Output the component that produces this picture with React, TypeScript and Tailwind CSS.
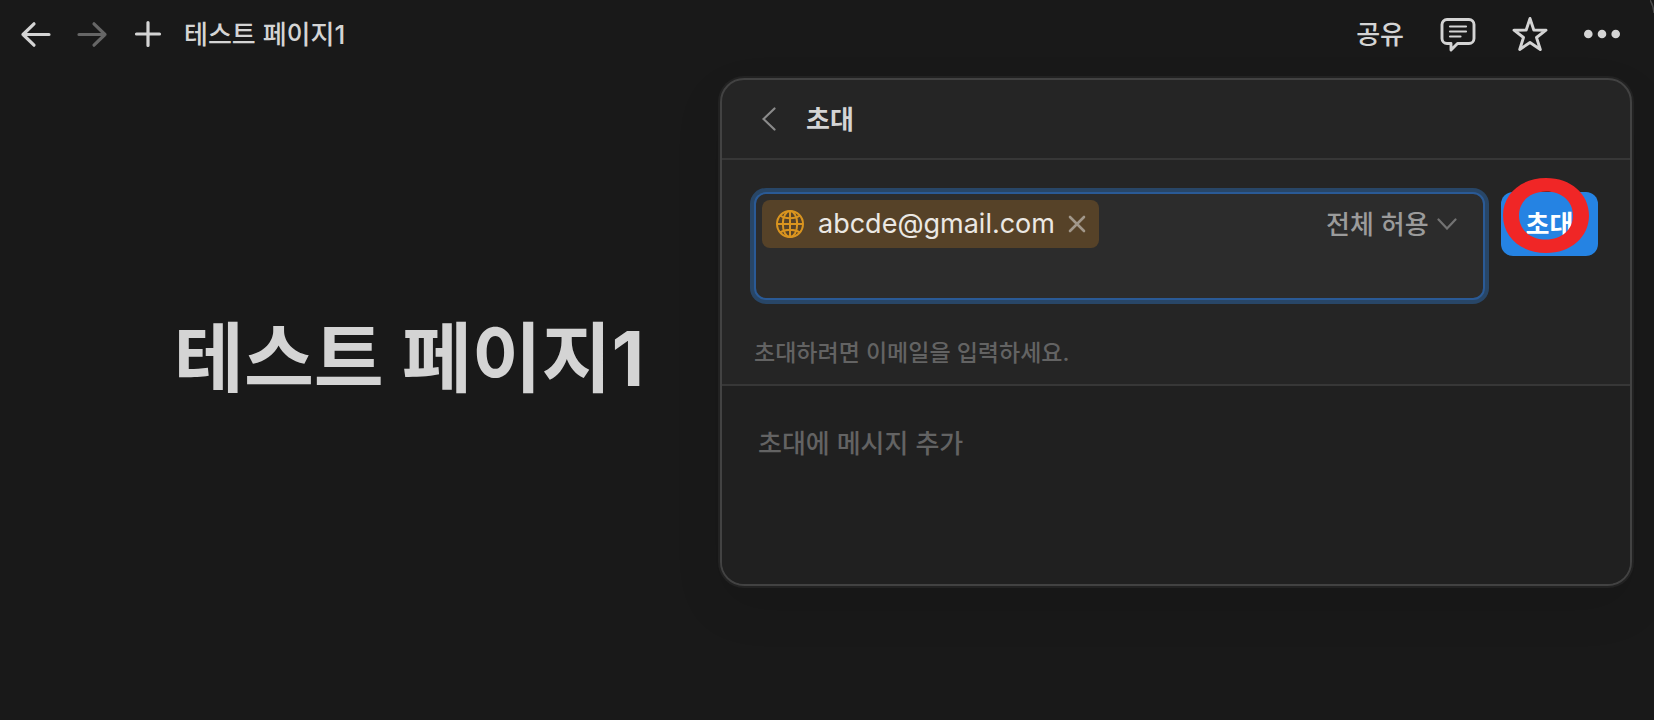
import type { ReactNode } from "react";

function IconButton({ label, children }: { label: string; children: ReactNode }) {
  return (
    <button type="button" aria-label={label} className="flex shrink-0 items-center justify-center">
      {children}
    </button>
  );
}

function ArrowIcon({ className }: { className?: string }) {
  return (
    <svg width="32" height="32" viewBox="0 0 32 32" fill="none" stroke="currentColor" strokeWidth="3.2" strokeLinecap="round" strokeLinejoin="round" className={className}>
      <path d="M29 16.5H3M14 5.8 3 16.5l11 10.7" />
    </svg>
  );
}

function PlusIcon() {
  return (
    <svg width="32" height="32" viewBox="0 0 32 32" fill="none" stroke="currentColor" strokeWidth="3.2" strokeLinecap="round">
      <path d="M16 4.5v23M4.5 16h23" />
    </svg>
  );
}

function CommentIcon() {
  return (
    <svg width="36" height="36" viewBox="0 0 36 36" fill="none" stroke="currentColor" strokeLinejoin="round" strokeLinecap="round">
      <path strokeWidth="2.9" d="M7 3.5h22a5 5 0 0 1 5 5v14a5 5 0 0 1-5 5H17.500L11 34V27.500H7a5 5 0 0 1-5-5v-14a5 5 0 0 1 5-5Z" />
      <path strokeWidth="2.2" d="M10 10.5h16M10 15.5h16M10 20.5h10.5" />
    </svg>
  );
}

function StarIcon() {
  return (
    <svg width="36" height="36" viewBox="0 0 36 36" fill="none" stroke="currentColor" strokeWidth="2.9" strokeLinejoin="round">
      <path d="M18 2.5 21.800 14 34 14.200 24.500 21.500 28.300 33.500 18 26.500 7.700 33.500 11.500 21.500 2 14.200 14.200 14Z" />
    </svg>
  );
}

function DotsIcon() {
  return (
    <svg width="38" height="36" viewBox="0 0 38 36" fill="currentColor">
      <circle cx="4.3" cy="18" r="4.3" />
      <circle cx="18" cy="18" r="4.3" />
      <circle cx="31.7" cy="18" r="4.3" />
    </svg>
  );
}

function GlobeIcon() {
  return (
    <svg width="28" height="28" viewBox="0 0 28 28" fill="none" stroke="currentColor" strokeWidth="2" className="shrink-0 text-[#d9941f]">
      <circle cx="14" cy="14" r="13" />
      <ellipse cx="14" cy="14" rx="7.2" ry="13" />
      <path d="M14 1v26M1 14h26M4 5.5c5 3.6 15 3.6 20 0M4 22.5c5-3.6 15-3.6 20 0" />
    </svg>
  );
}

function Toolbar() {
  return (
    <header className="flex h-[68px] items-center justify-between pr-8 pl-5 text-[26px] font-medium">
      <nav className="flex items-center">
        <IconButton label="뒤로">
          <ArrowIcon />
        </IconButton>
        <div className="ml-6 flex text-[#666666]">
          <IconButton label="앞으로">
            <ArrowIcon className="-scale-x-100" />
          </IconButton>
        </div>
        <div className="ml-6 flex">
          <IconButton label="새 페이지">
            <PlusIcon />
          </IconButton>
        </div>
        <a href="#page" className="ml-5">
          테스트 페이지1
        </a>
      </nav>
      <div className="flex items-center gap-9">
        <button type="button">공유</button>
        <IconButton label="댓글">
          <CommentIcon />
        </IconButton>
        <IconButton label="즐겨찾기">
          <StarIcon />
        </IconButton>
        <IconButton label="더 보기">
          <DotsIcon />
        </IconButton>
      </div>
    </header>
  );
}

function EmailChip({ email }: { email: string }) {
  return (
    <span className="flex h-12 items-center rounded-lg bg-[#564228] pr-3 pl-[14px] text-[27px] text-[#ebe8e3]">
      <GlobeIcon />
      <span className="ml-[14px]">{email}</span>
      <button type="button" aria-label={`${email} 삭제`} className="ml-3 text-[#a1978a]">
        <svg width="20" height="20" viewBox="0 0 20 20" fill="none" stroke="currentColor" strokeWidth="2.6" strokeLinecap="round">
          <path d="m3 3 14 14M17 3 3 17" />
        </svg>
      </button>
    </span>
  );
}

function PermissionSelect() {
  return (
    <div className="flex h-12 items-center pr-[26px] text-[#9b9b9b]">
      <select
        aria-label="권한"
        className="appearance-none bg-transparent text-[26px] font-medium outline-none"
      >
        <option>전체 허용</option>
      </select>
      <svg width="20" height="12" viewBox="0 0 20 12" fill="none" stroke="currentColor" strokeWidth="2.2" strokeLinecap="round" className="ml-2 text-[#737373]">
        <path d="m1.5 1.5 8.500 9 8.500-9" />
      </svg>
    </div>
  );
}

function InvitePanel() {
  return (
    <section
      aria-label="초대"
      className="w-[912px] shrink-0 overflow-hidden rounded-3xl border-2 border-[#424242] bg-[#252525] shadow-[0_0_0_2px_#222222,0_20px_48px_rgba(0,0,0,0.1)]"
    >
      <div className="flex h-20 items-center border-b-2 border-[#373737] pl-10">
        <button type="button" aria-label="뒤로" className="text-[#8a8a8a]">
          <svg width="14" height="24" viewBox="0 0 14 24" fill="none" stroke="currentColor" strokeWidth="2.2" strokeLinecap="round">
            <path d="M12.5 1.5 1.5 12l11 10.5" />
          </svg>
        </button>
        <h2 className="ml-[30px] text-[26px] font-bold">초대</h2>
      </div>

      <div className="border-b-2 border-[#373737] px-8 pt-8 pb-[14px]">
        <div className="flex items-start gap-4">
          <div className="flex h-[108px] flex-1 flex-col rounded-xl border-2 border-[#2a5a96] bg-[#2c2c2c] pt-[6px] pl-[6px] ring-4 ring-[#284667]">
            <div className="flex items-center justify-between">
              <EmailChip email="abcde@gmail.com" />
              <PermissionSelect />
            </div>
            <input type="email" aria-label="이메일" className="h-12 w-full bg-transparent text-[27px] outline-none" />
          </div>
          <div className="relative">
            <button type="button" className="h-16 w-[97px] rounded-xl bg-[#2583e3] text-[26px] font-bold text-white">
              초대
            </button>
            {/* hand-drawn marker over the button */}
            <svg width="86" height="76" viewBox="0 0 86 76" fill="#f02626" className="pointer-events-none absolute -top-[14px] left-[2px]">
              <path
                fillRule="evenodd"
                d="M43 0C18 0 0 16 0 37.500S18 75 43 75s43-16 43-37.500S68 0 43 0ZM43 13.500c16 0 27 10 27 24s-11 24-27 24-27-10-27-24 11-24 27-24Z"
              />
            </svg>
          </div>
        </div>
        <p className="mt-9 text-[23px] leading-[34px] font-medium text-[#636363]">초대하려면 이메일을 입력하세요.</p>
      </div>

      <textarea
        aria-label="메시지"
        placeholder="초대에 메시지 추가"
        className="block h-[198px] w-full resize-none bg-[#202020] px-9 pt-[38px] text-[26px] leading-[40px] font-medium outline-none placeholder:text-[#636363]"
      />
    </section>
  );
}

export default function App() {
  return (
    <div className="relative min-h-screen overflow-hidden bg-[#191919] font-['Inter','Noto_Sans_CJK_KR',sans-serif] text-[#d4d4d4]">
      <Toolbar />
      <main className="flex items-start justify-between pt-[10px] pr-[22px] pl-[174px]">
        <h1 id="page" className="pt-[232px] text-[76px] leading-[96px] font-bold whitespace-nowrap">
          테스트 페이지1
        </h1>
        <InvitePanel />
      </main>
      {/* rounded window edge */}
      <svg width="4" height="14" viewBox="0 0 4 14" fill="none" className="absolute top-0 right-0 text-[#4a4a4a]">
        <path d="M0 0C2 3 3.500 7 4 13" stroke="currentColor" strokeWidth="1.5" />
      </svg>
    </div>
  );
}
